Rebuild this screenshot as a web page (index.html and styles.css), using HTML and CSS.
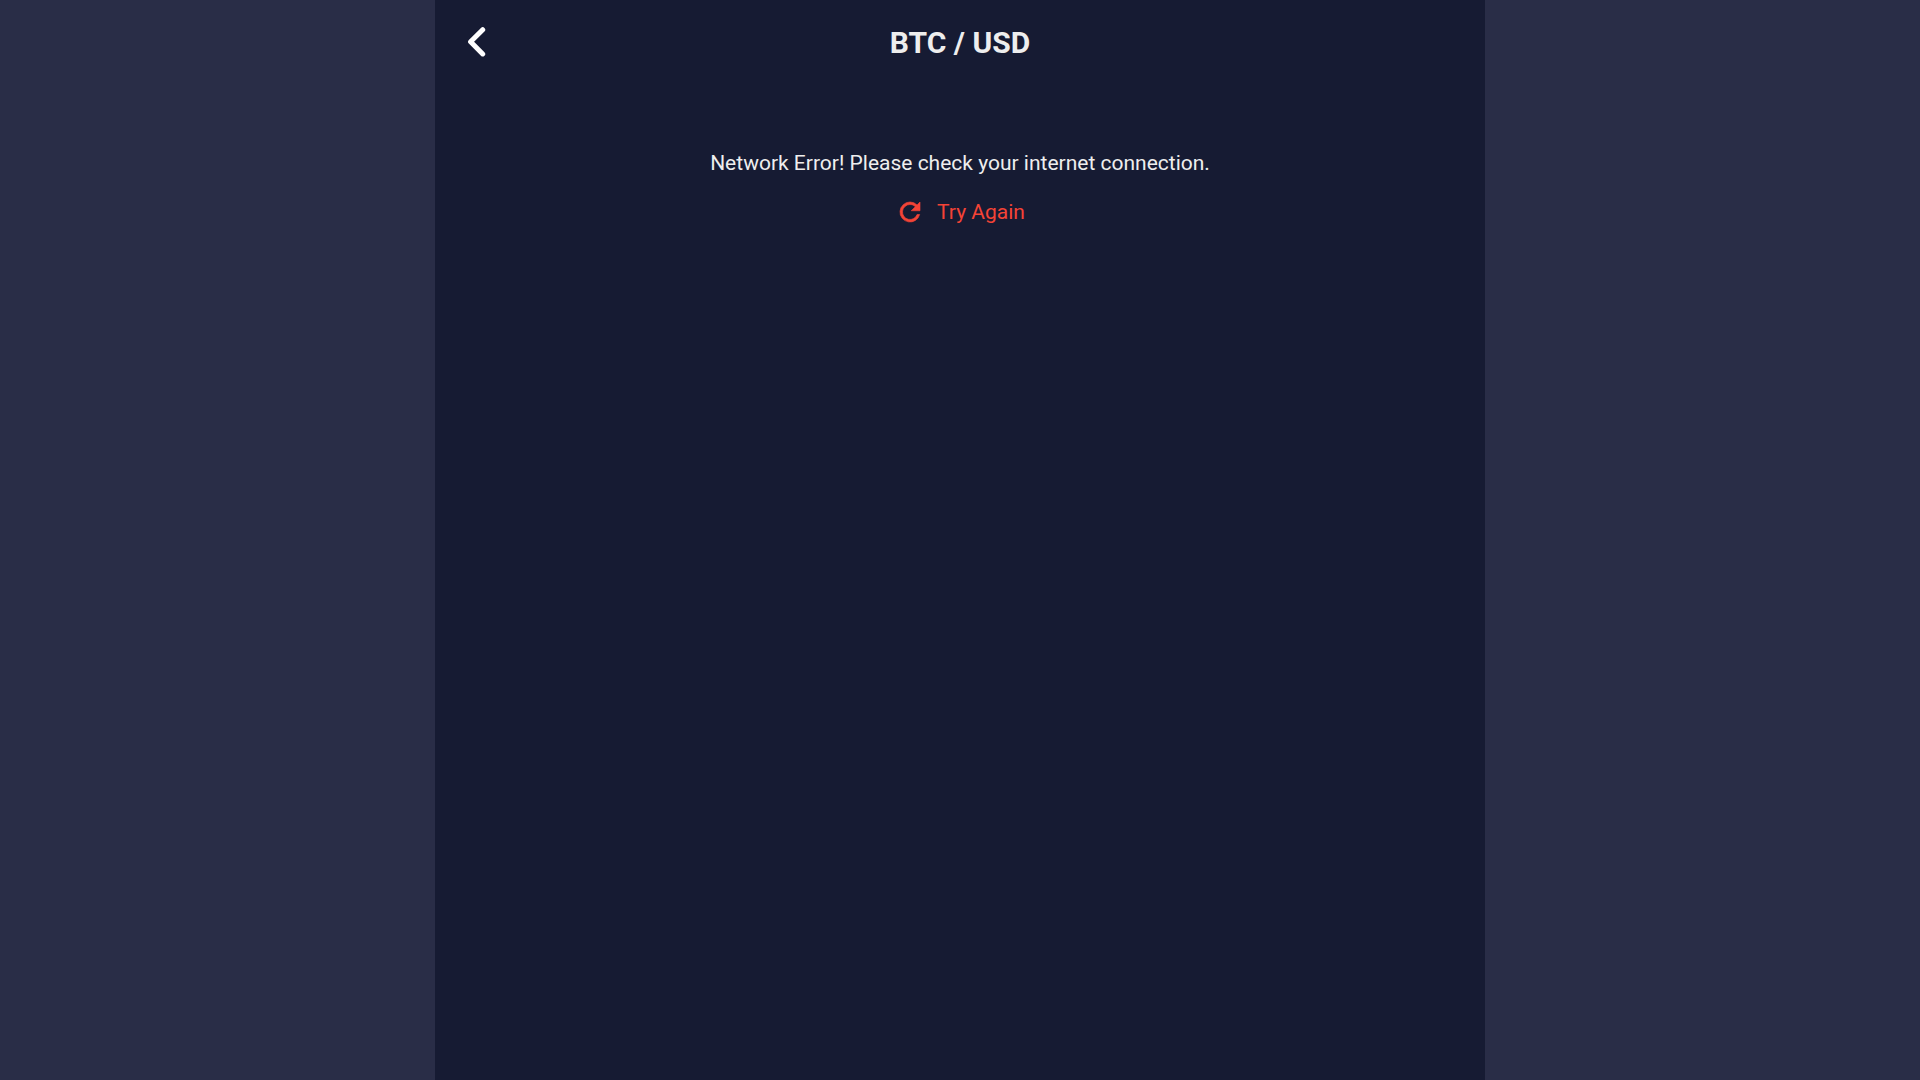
FILE: index.html
```html
<!DOCTYPE html>
<html lang="en">
<head>
<meta charset="utf-8">
<meta name="viewport" content="width=device-width, initial-scale=1">
<title>BTC / USD</title>
<link rel="stylesheet" href="styles.css">
</head>
<body>
<div class="panel">
  <header class="topbar">
    <button class="back" type="button" aria-label="Back">
      <svg class="back-icon" viewBox="0 0 32 32" aria-hidden="true"><path d="M22.7 2.7 10.6 14.8 22.7 26.9"/></svg>
    </button>
    <h1 class="title">BTC / USD</h1>
  </header>
  <main class="error">
    <p class="message">Network Error! Please check your internet connection.</p>
    <button class="retry" type="button">
      <svg class="retry-icon" viewBox="0 0 24 24" aria-hidden="true"><path d="M17.65 6.35A7.96 7.96 0 0 0 12 4a8 8 0 1 0 7.73 10h-2.08A6 6 0 1 1 12 6c1.66 0 3.14.69 4.22 1.78L13 11h7V4z"/></svg>
      <span>Try Again</span>
    </button>
  </main>
</div>
</body>
</html>
```
FILE: styles.css
```css
* {
  box-sizing: border-box;
}

body {
  margin: 0;
  background: #292d47;
  color: #eee;
  font-family: Roboto, "Liberation Sans", sans-serif;
  font-size: 21px;
  line-height: 28px;
}

.panel {
  max-width: 1050px;
  min-height: 100vh;
  margin: 0 auto;
  background: #161b33;
}

.topbar {
  display: grid;
  grid-template-columns: 32px 1fr 32px;
  align-items: center;
  height: 86px;
  padding: 0 25px;
}

button {
  padding: 0;
  border: 0;
  background: none;
  font: inherit;
  cursor: pointer;
}

.back {
  display: flex;
}

.back-icon {
  width: 32px;
  height: 32px;
  fill: none;
  stroke: #fff;
  stroke-width: 5;
  stroke-linecap: round;
  stroke-linejoin: round;
}

.title {
  margin: 0;
  font-size: 30px;
  font-weight: 700;
  line-height: 38px;
  text-align: center;
}

.error {
  display: flex;
  flex-direction: column;
  align-items: center;
  gap: 20px;
  padding: 63px 24px;
}

.message {
  margin: 0;
  text-align: center;
}

.retry {
  display: flex;
  align-items: center;
  gap: 12px;
  color: #f44336;
}

.retry-icon {
  width: 30px;
  height: 30px;
  fill: currentColor;
  stroke: currentColor;
  stroke-width: 0.5;
}
```
